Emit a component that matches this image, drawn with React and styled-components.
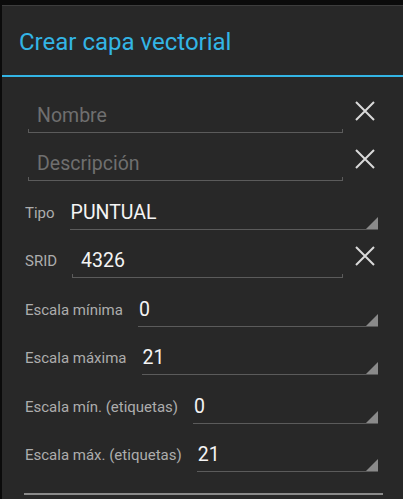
import React from "react";
import styled, { createGlobalStyle } from "styled-components";

const Global = createGlobalStyle`
  html, body { margin: 0; padding: 0; background: #0b0b0b; }
  body { font-family: Roboto, "Noto Sans", "Liberation Sans", sans-serif; }
  * { box-sizing: border-box; }
`;

const Page = styled.div`
  width: 403px;
  height: 499px;
  overflow: hidden;
  padding: 5px 0 0 2px;
  background: #0b0b0b;
`;

const Dialog = styled.div`
  width: 401px;
  height: 600px;
  background: #282828;
  border-top: 1px solid #3d3d3d;
`;

const Header = styled.div`
  height: 71px;
  padding: 22px 0 0 17px;
  border-bottom: 2px solid #33b5e5;
`;

const Title = styled.div`
  color: #33b5e5;
  font-size: 24px;
  line-height: 28px;
`;

const Body = styled.div`
  padding: 0 25px 0 23px;
  display: flex;
  flex-direction: column;
`;

const Row = styled.div`
  height: ${(p) => p.$h}px;
  display: flex;
  align-items: flex-end;
`;

const Label = styled.div`
  color: #adadad;
  font-size: 15px;
  line-height: 18px;
  padding-bottom: 8px;
  margin-right: 15px;
  white-space: nowrap;
`;

const Field = styled.div`
  width: ${(p) => p.$w}px;
  margin-left: ${(p) => p.$ml || 0}px;
  display: flex;
  flex-direction: column;
`;

const FieldText = styled.div`
  font-size: 19.5px;
  line-height: 24px;
  padding: 0 0 1px 9px;
  color: ${(p) => (p.$placeholder ? "#6f6f6f" : "#f4f4f4")};
  white-space: nowrap;
`;

const Underline = styled.div`
  height: 4px;
  border: 1px solid #5b5b5b;
  border-top: none;
`;

const ClearButton = styled.div`
  flex: 1;
  align-self: stretch;
  display: flex;
  align-items: flex-end;
  justify-content: flex-end;
  padding: 0 3px 12px 0;
`;

const Spinner = styled.div`
  flex: 1;
  display: flex;
  align-items: flex-end;
  border-bottom: 1px solid #5b5b5b;
`;

const SpinnerValue = styled.div`
  flex: 1;
  font-size: 19.5px;
  line-height: 24px;
  padding: 0 0 4px 1px;
  color: #f4f4f4;
  white-space: nowrap;
`;

const Divider = styled.div`
  margin: 21px 20px 0 22px;
  height: 2px;
  background: #8a8a8a;
`;

const ClearIcon = () => (
  <svg width="20" height="20" viewBox="0 0 20 20">
    <path d="M1 1 L19 19 M19 1 L1 19" stroke="#dadada" strokeWidth="2" fill="none" />
  </svg>
);

const Corner = () => (
  <svg width="12" height="12" viewBox="0 0 12 12" style={{ display: "block" }}>
    <path d="M12 0 L12 12 L0 12 Z" fill="#8a8a8a" />
  </svg>
);

const TextRow = ({ h, label, value, placeholder, width, ml }) => (
  <Row $h={h}>
    {label && <Label>{label}</Label>}
    <Field $w={width} $ml={ml}>
      <FieldText $placeholder={placeholder}>{value}</FieldText>
      <Underline />
    </Field>
    <ClearButton>
      <ClearIcon />
    </ClearButton>
  </Row>
);

const SpinRow = ({ h, label, value }) => (
  <Row $h={h}>
    <Label>{label}</Label>
    <Spinner>
      <SpinnerValue>{value}</SpinnerValue>
      <Corner />
    </Spinner>
  </Row>
);

export default function App() {
  return (
    <>
      <Global />
      <Page>
        <Dialog>
          <Header>
            <Title>Crear capa vectorial</Title>
          </Header>
          <Body>
            <TextRow h={56} value="Nombre" placeholder width={315} ml={3} />
            <TextRow h={48} value="Descripción" placeholder width={315} ml={3} />
            <SpinRow h={49} label="Tipo" value="PUNTUAL" />
            <TextRow h={48} label="SRID" value="4326" width={271} />
            <SpinRow h={49} label="Escala mínima" value="0" />
            <SpinRow h={48} label="Escala máxima" value="21" />
            <SpinRow h={49} label="Escala mín. (etiquetas)" value="0" />
            <SpinRow h={48} label="Escala máx. (etiquetas)" value="21" />
          </Body>
          <Divider />
        </Dialog>
      </Page>
    </>
  );
}
